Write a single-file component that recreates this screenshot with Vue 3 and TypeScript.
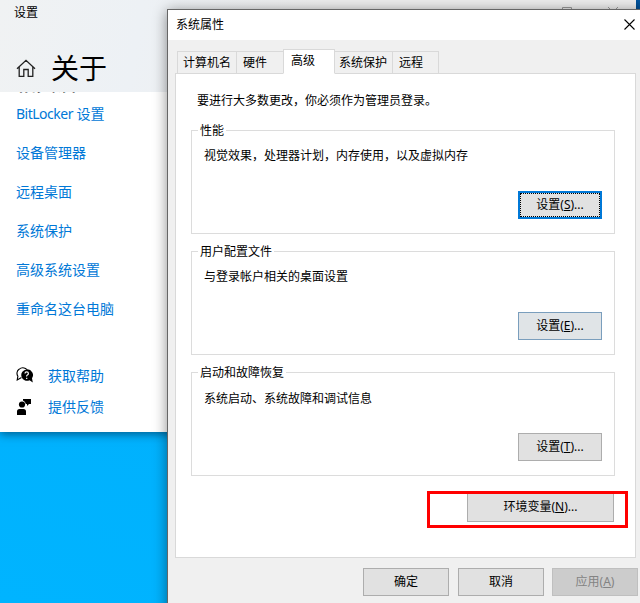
<script setup lang="ts">
interface Group { title: string; text: string; key: string; kind: string }
const links: string[] = ['设备管理器', '远程桌面', '系统保护', '高级系统设置', '重命名这台电脑']
const tabs = [
  { label: '计算机名', cls: 't1' },
  { label: '硬件', cls: 't2' },
  { label: '高级', cls: 'active' },
  { label: '系统保护', cls: 't4' },
  { label: '远程', cls: 't5' },
]
const groups: Group[] = [
  { title: '性能', text: '视觉效果，处理器计划，内存使用，以及虚拟内存', key: 'S', kind: 'focused' },
  { title: '用户配置文件', text: '与登录帐户相关的桌面设置', key: 'E', kind: 'hot' },
  { title: '启动和故障恢复', text: '系统启动、系统故障和调试信息', key: 'T', kind: '' },
]
</script>

<template>
  <div class="desktop">
    <section class="settings">
      <header class="settings-head">
        <div class="app-name">设置</div>
        <div class="heading">
          <svg class="home" width="20" height="20" viewBox="0 0 20 20">
            <path d="M1 10.7 10 2.3 19 10.7M3.2 9V18.3H7.800V11.500H12.200V18.300H16.800V9" fill="none" stroke="#222" stroke-width="1.3" />
          </svg>
          <h1>关于</h1>
        </div>
        <svg class="caption" width="60" height="9" viewBox="0 0 60 9">
          <path d="M2.5 9V7.5H11.5V9M48 7l4 4M58 7l-4 4" fill="none" stroke="#999" />
        </svg>
      </header>
      <div class="cut"><b>相关设置</b></div>
      <nav class="links">
        <a><span class="latin">BitLocker</span> 设置</a>
        <a v-for="l in links" :key="l">{{ l }}</a>
      </nav>
      <nav class="support">
        <a>
          <svg width="18" height="18" viewBox="0 0 18 18">
            <path d="M5.500 10.500 1.200 13 1.900 9.200A5 5 0 0 1 3 2.300Q6-.300 9.500 1.500L11 2.600" fill="none" stroke="#000" stroke-width="1.1" />
            <path d="M10.700 2.400a5.700 5.700 0 1 0 2.800 10.800L16.800 15.600 16 11.300A5.700 5.700 0 0 0 10.700 2.400Z" fill="#000" />
            <path d="M9 6.500Q9 4.900 10.700 4.900T12.400 6.500Q12.400 7.500 11.400 8.100T10.700 9.500M10.700 10.700V11.900" fill="none" stroke="#fff" stroke-width="1.200" />
          </svg>
          <span>获取帮助</span>
        </a>
        <a>
          <svg width="18" height="18" viewBox="0 0 18 18">
            <circle cx="6" cy="6.500" r="3.100" /><path d="M1 17v-3.500Q1 11 3.500 11h4Q10 11 10 13.500V17ZM7 1h8v5h-2l-2 2V6H9.800Q9.600 3.400 7 2.400Z" />
          </svg>
          <span>提供反馈</span>
        </a>
      </nav>
    </section>

    <section class="dialog">
      <header class="titlebar">
        <span>系统属性</span>
        <svg width="11" height="11" viewBox="0 0 11 11"><path d="M.5.5l10 10M10.500.5l-10 10" stroke="#000" stroke-width="1.100" /></svg>
      </header>
      <div class="tabs"><div v-for="t in tabs" :key="t.label" class="tab" :class="t.cls">{{ t.label }}</div></div>
      <main class="panel">
        <p class="intro">要进行大多数更改，你必须作为管理员登录。</p>
        <div v-for="g in groups" :key="g.key" class="group">
          <div class="legend"><span>{{ g.title }}</span></div>
          <p>{{ g.text }}</p>
          <button :class="g.kind">设置(<u>{{ g.key }}</u>)...</button>
        </div>
        <div class="env"><button>环境变量(<u>N</u>)...</button></div>
      </main>
      <footer class="actions">
        <button>确定</button>
        <button>取消</button>
        <button class="disabled">应用(<u>A</u>)</button>
      </footer>
      <div class="highlight"></div>
    </section>
  </div>
</template>

<style>
body { overflow: hidden; }
</style>
<style scoped>
* { box-sizing: border-box; }
.desktop { position: relative; width: 640px; height: 603px; overflow: hidden; background: linear-gradient(to bottom, #005aa8 0 10px, transparent 10px), linear-gradient(18deg, #00b4ff, #00acfa 80%); font: 12px/16px "Noto Sans", "Noto Sans CJK SC", sans-serif; color: #000; }
.settings { width: 636px; height: 432px; background: #fff; box-shadow: 0 2px 9px rgba(0, 30, 60, .6); }
.settings-head { position: relative; height: 92px; background: linear-gradient(100deg, #f0f2f3, #edf1f5 22%, #eee 50%); }
.app-name { padding: 5px 0 0 14px; }
.heading { display: flex; padding: 27px 0 0 16px; }
.home { margin-top: 10px; }
h1 { margin: 0 0 0 15px; font-size: 28px; line-height: 40px; font-weight: 400; }
.caption { position: absolute; left: 560px; top: 0; }
.cut { height: 10px; overflow: hidden; padding-left: 16px; font-size: 20px; display: flex; align-items: flex-start; }
.cut b { margin-top: -18px; line-height: 20px; font-weight: 500; }
.links { display: flex; flex-direction: column; padding: 2px 0 0 16px; }
.links a { height: 39px; line-height: 20px; font-size: 14px; color: #0078d7; }
.latin { letter-spacing: -.5px; }
.support { padding: 28px 0 0 16px; }
.support a { display: flex; height: 31px; gap: 14px; font-size: 14px; line-height: 20px; color: #0078d7; }
.support svg { margin-top: 1px; }
.dialog { position: absolute; left: 167px; top: 9px; width: 480px; height: 610px; border: 1px solid #666; background: #f0f0f0; box-shadow: 0 2px 13px rgba(0, 0, 0, .45); }
.titlebar { display: flex; justify-content: space-between; height: 30px; padding: 7px 9px 0 8px; background: #fff; }
.titlebar svg { margin: 2px 2px 0 0; }
.tabs { display: flex; align-items: flex-end; height: 34px; padding-left: 9px; margin-bottom: -1px; position: relative; }
.tab { height: 23px; border: 1px solid #d9d9d9; border-right: 0; padding: 3px 0 0 5px; width: 59px; }
.t2 { width: 47px; }
.t2, .t5 { padding-left: 6px; }
.active { width: 52px; height: 25px; background: #fff; border-right: 1px solid #d9d9d9; border-bottom-color: #fff; padding-left: 7px; }
.t4 { width: 57px; border-left: 0; padding-left: 4px; }
.t5 { width: 47px; border-right: 1px solid #d9d9d9; }
.panel { width: 461px; height: 485px; margin-left: 7px; padding: 20px 20px 0 15px; border: 1px solid #d9d9d9; background: #fff; }
p { margin: 0; }
.intro { padding-left: 6px; margin-top: -1px; height: 37px; }
.group { width: 424px; height: 104px; border: 1px solid #dcdcdc; margin-bottom: 17px; display: flex; flex-direction: column; padding: 0 12px 14px; }
.legend { height: 16px; margin: -8px 0 0 -6px; }
.legend span { display: inline-block; background: #fff; padding: 0 2px; }
.group p { margin-top: 9px; }
.group:nth-of-type(3) p { margin-top: 10px; }
button { font: inherit; color: #000; padding: 0 0 1px; height: 28px; background: #e1e1e1; border: 1px solid #adadad; }
.group button { width: 84px; margin: auto 0 0 auto; }
.group .focused { border: 2px solid #0078d7; outline: 1px dotted #000; outline-offset: -3px; }
.group .hot { background: #e0e4e7; border-color: #7a9ebd; }
.env { display: flex; justify-content: flex-end; padding-right: 1px; }
.env button { width: 147px; height: 29px; }
.actions { display: flex; padding: 10px 0 0 195px; gap: 9px; }
.actions button { width: 86px; }
.actions .disabled { margin-left: -1px; background: #ccc; border-color: #bfbfbf; color: #838383; }
.highlight { position: absolute; left: 259px; top: 481px; width: 201px; height: 37px; border: 3px solid #f00; }
u { text-underline-offset: 1px; }
</style>
